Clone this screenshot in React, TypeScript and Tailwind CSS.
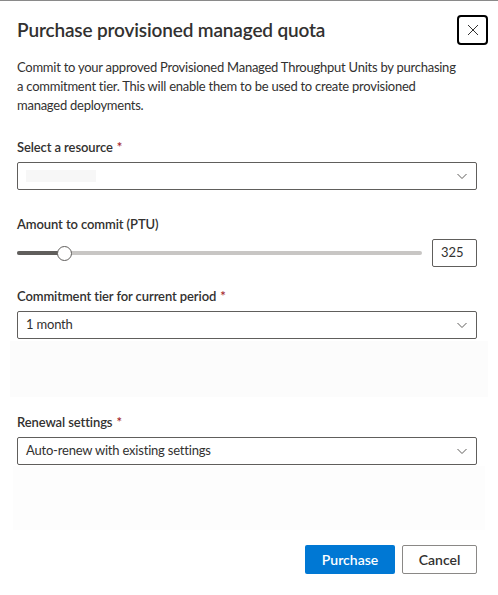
import React from "react";

function Chevron() {
  return (
    <svg width="12" height="12" viewBox="0 0 12 12" className="text-[#605e5c]">
      <path d="M1.5 4 L6 8.5 L10.5 4" fill="none" stroke="currentColor" strokeWidth="1" />
    </svg>
  );
}

function Label({ text, required }: { text: string; required?: boolean }) {
  return (
    <div className="text-[13px] tracking-[-0.1px] font-semibold text-[#323130] leading-5 mb-[5px]">
      {text}
      {required && <span className="text-[#a4262c] ml-1">*</span>}
    </div>
  );
}

function Dropdown({ value }: { value?: string }) {
  return (
    <div className="h-[28px] border border-[#605e5c] rounded-[2px] flex items-center justify-between pl-2 pr-2 bg-white">
      {value ? (
        <span className="text-[13px] tracking-[-0.2px] text-[#323130]">{value}</span>
      ) : (
        <span className="h-3 w-[70px] bg-[#f7f7f7]" />
      )}
      <Chevron />
    </div>
  );
}

export default function App() {
  return (
    <div
      className="w-[498px] h-[595px] bg-white border-t border-[#8a8a8a] flex flex-col"
      style={{ fontFamily: 'Lato, "Noto Sans", sans-serif' }}
    >
      <div className="flex items-start justify-between pl-[17px] pr-[10px] pt-[14px]">
        <h1 className="text-[19px] tracking-[-0.15px] font-semibold text-[#323130] leading-7 mt-[1px]">
          Purchase provisioned managed quota
        </h1>
        <button className="w-[31px] h-[30px] border-2 border-black rounded-[4px] flex items-center justify-center">
          <svg width="12" height="12" viewBox="0 0 12 12">
            <path d="M1 1 L11 11 M11 1 L1 11" stroke="#323130" strokeWidth="1" />
          </svg>
        </button>
      </div>

      <div className="px-[17px] pr-[21px]">
        <p className="text-[13px] tracking-[-0.25px] text-[#323130] leading-[19px] mt-[13px] pr-[14px]">
          Commit to your approved Provisioned Managed Throughput Units by purchasing a commitment
          tier. This will enable them to be used to create provisioned managed deployments.
        </p>

        <div className="mt-[22px]">
          <Label text="Select a resource" required />
          <Dropdown />
        </div>

        <div className="mt-[24px]">
          <Label text="Amount to commit (PTU)" />
          <div className="flex items-center gap-[10px]">
            <div className="flex-1 relative h-[20px] flex items-center">
              <div className="w-full h-[4px] rounded-full bg-[#c8c6c4]" />
              <div className="absolute left-0 w-[44px] h-[4px] rounded-full bg-[#605e5c]" />
              <div className="absolute left-[40px] w-[15px] h-[15px] rounded-full bg-white border border-[#605e5c]" />
            </div>
            <div className="w-[45px] h-[28px] border border-[#605e5c] rounded-[2px] flex items-center pl-[8px] text-[13px] text-[#323130]">
              325
            </div>
          </div>
        </div>

        <div className="mt-[19px]">
          <Label text="Commitment tier for current period" required />
          <Dropdown value="1 month" />
        </div>
      </div>

      <div className="mx-[10px] mt-[2px] h-[56px] bg-[#fcfcfc]" />

      <div className="px-[17px] pr-[21px] mt-[15px]">
        <Label text="Renewal settings" required />
        <Dropdown value="Auto-renew with existing settings" />
      </div>

      <div className="mx-[13px] mt-[1px] h-[64px] bg-[#fdfdfd]" />

      <div className="flex justify-end gap-[7px] pr-[21px] mt-[15px]">
        <button className="w-[90px] h-[29px] rounded-[2px] bg-[#0078d4] text-white text-[14px] font-semibold">
          Purchase
        </button>
        <button className="w-[75px] h-[29px] rounded-[2px] border border-[#8a8886] bg-white text-[#323130] text-[14px] font-semibold">
          Cancel
        </button>
      </div>
    </div>
  );
}
